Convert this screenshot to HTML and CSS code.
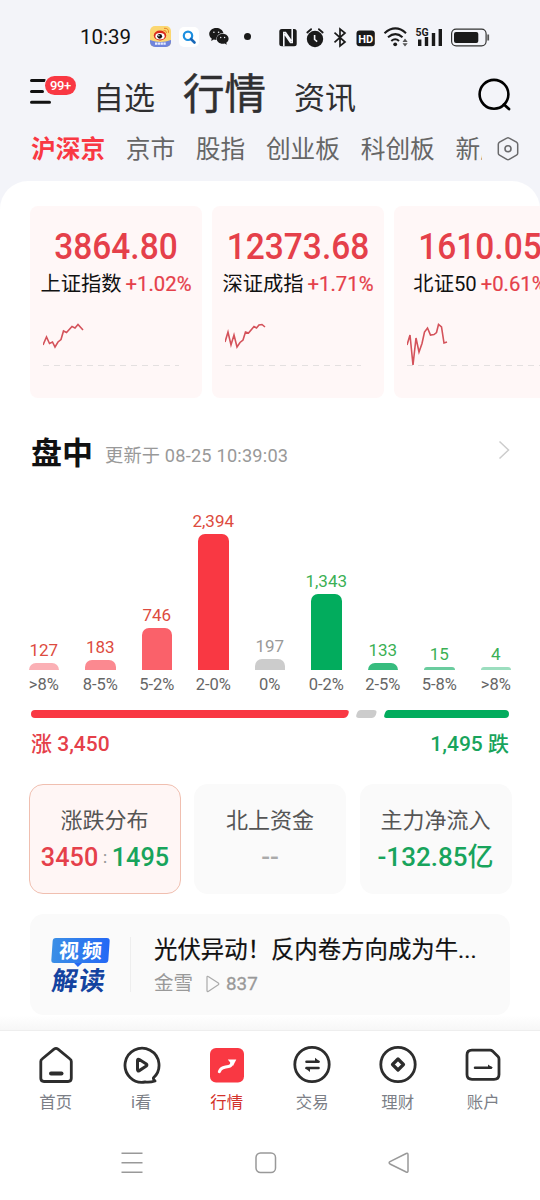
FILE: index.html
```html
<!DOCTYPE html>
<html lang="zh-CN">

<head>
    <meta charset="UTF-8">
    <meta name="viewport" content="width=device-width, initial-scale=1.0">
    <title>行情</title>
    <link rel="stylesheet" href="styles.css">
</head>

<body>

    <!-- Phone status bar -->
    <div class="status-bar">
        <span class="time">10:39</span>
        <svg class="st-weibo" width="21" height="21" viewBox="0 0 21 21">
            <defs>
                <clipPath id="appShape"><rect width="21" height="21" rx="5" /></clipPath>
            </defs>
            <g clip-path="url(#appShape)">
                <rect width="21" height="21" fill="#fbd772" />
                <path d="M0 14q10.500 4 21 0v7H0z" fill="#6f84dc" />
                <ellipse cx="10" cy="9.500" rx="6.200" ry="5" fill="#d92a1c" />
                <ellipse cx="10" cy="10.300" rx="4.600" ry="3.300" fill="#fff" />
                <circle cx="9.700" cy="10.300" r="2.400" fill="#111" />
                <circle cx="8.900" cy="9.800" r=".7" fill="#fff" />
                <path d="M13.500 4.500q3-.5 3 2.500M14 2.300q5-.5 4.500 4.500" fill="none" stroke="#e8842a" stroke-width="1" />
                <path d="M5 17.600h11" stroke="#e8ecff" stroke-width="2.200" stroke-dasharray="2.300 .5" />
            </g>
        </svg>
        <svg class="st-search" width="20" height="20" viewBox="0 0 20 20">
            <rect width="20" height="20" rx="5" fill="#fff" />
            <circle cx="9" cy="8.800" r="4.200" fill="none" stroke="#1d8fe0" stroke-width="2.200" />
            <path d="M12 12l3.500 3.500" stroke="#1767b8" stroke-width="2.600" stroke-linecap="round" />
        </svg>
        <svg class="st-wechat" width="20" height="17" viewBox="0 0 20 17">
            <path d="M7.300 0C3.200 0 .2 2.700.2 6c0 1.900 1 3.500 2.500 4.600L2.200 13l2.600-1.400q1.200.4 2.600.4C7 8 10 5 14.400 5 13.700 2 10.800 0 7.300 0z" fill="#1a1a1a" />
            <path d="M13.700 5.800c-3.400 0-6 2.200-6 5s2.600 5 6 5q1 0 2-.3l2.100 1.200-.5-2c1.400-.9 2.300-2.300 2.300-3.900 0-2.800-2.600-5-5.900-5z" fill="#1a1a1a" />
            <g fill="#f4f5fa">
                <circle cx="4.900" cy="4.300" r=".8" />
                <circle cx="9.600" cy="4.300" r=".8" />
                <circle cx="11.700" cy="9.500" r=".7" />
                <circle cx="15.600" cy="9.500" r=".7" />
            </g>
        </svg>
        <span class="st-dot"></span>
        <svg class="st-system" width="212" height="22" viewBox="278 25 212 22">
            <!-- nfc -->
            <rect x="279.300" y="28" width="17.400" height="17.300" rx="2.500" fill="#1a1a1a" />
            <path d="M283.800 45.300V31.500h1.700l5.800 8.500M292.200 28v13.500h-1.700l-5.800-8.500" fill="none" stroke="#f4f5fa" stroke-width="1.600" />
            <!-- alarm -->
            <circle cx="315" cy="38" r="8.200" fill="#1a1a1a" />
            <path d="M307.300 31.500l3.800-3.300M322.700 31.500l-3.800-3.300" stroke="#1a1a1a" stroke-width="1.800" stroke-linecap="round" />
            <path d="M314.600 34v4.500l2.600 2.200" fill="none" stroke="#f4f5fa" stroke-width="1.600" />
            <!-- bluetooth -->
            <path d="M334.500 31.700l10.500 9.300-5 4V28l5 4-10.500 9.300" fill="none" stroke="#1a1a1a" stroke-width="1.700" />
            <!-- hd -->
            <rect x="356.500" y="29.500" width="18.300" height="15.800" rx="3" fill="#1a1a1a" />
            <text x="365.700" y="42" class="st-hd">HD</text>
            <!-- wifi -->
            <g fill="none" stroke="#1a1a1a" stroke-width="2.100">
                <path d="M384.500 32.200q11-9.500 21.500 0" />
                <path d="M388 36.300q7.500-6.300 14.500 0" />
                <path d="M391.300 40q4-3.500 7.700 0" />
            </g>
            <circle cx="395.200" cy="43.300" r="1.900" fill="#1a1a1a" />
            <path d="M402.500 41l2.500-3.500 2.700 3.500zM402.500 42.200l2.500 3.300 2.700-3.300z" fill="#555" />
            <!-- signal -->
            <text x="415.500" y="35" class="st-5g">5G</text>
            <path d="M419.700 38.500V45M426.500 36V45M433.500 32V45M440.300 28V45" stroke="#1a1a1a" stroke-width="3.400" />
            <!-- battery -->
            <rect x="451.600" y="28.200" width="34.500" height="16.600" rx="4.500" fill="none" stroke="#333" stroke-width="1.200" />
            <rect x="454" y="31" width="24.300" height="11" rx="2" fill="#1a1a1a" />
            <path d="M488.200 33.500v6" stroke="#555" stroke-width="1.800" />
        </svg>
    </div>

    <!-- Main tabs -->
    <div class="top-nav">
        <div class="menu">
            <svg width="22" height="26" viewBox="0 0 22 26">
                <path d="M2.500 2.500h13M2.500 13.400h11M2.500 24.300h18" stroke="#111" stroke-width="3" stroke-linecap="round" />
            </svg>
            <span class="badge">99+</span>
        </div>
        <div class="top-tabs">
            <span>自选</span>
            <span class="active">行情</span>
            <span>资讯</span>
        </div>
        <svg class="search" width="34" height="34" viewBox="0 0 34 34">
            <circle cx="17" cy="16.300" r="14.400" fill="none" stroke="#000" stroke-width="2.600" />
            <path d="M27 26.500l5 4.500" stroke="#000" stroke-width="2.800" stroke-linecap="round" />
        </svg>
    </div>

    <div class="sub-nav">
        <div class="sub-tabs">
            <span class="active">沪深京</span>
            <span>京市</span>
            <span>股指</span>
            <span>创业板</span>
            <span>科创板</span>
            <span>新股</span>
        </div>
        <svg width="24" height="26" viewBox="0 0 24 26" fill="none" stroke="#6a6a6c">
            <path d="M10.800 2.200q1.200-.7 2.400 0l7.300 4q1.200.8 1.200 2v9q0 1.300-1.200 2l-7.300 4.100q-1.200.7-2.400 0l-7.300-4.100q-1.200-.7-1.200-2v-9q0-1.200 1.200-2z" stroke-width="1.500" />
            <circle cx="12" cy="12.700" r="3" stroke-width="1.600" />
        </svg>
    </div>

    <div class="panel">

        <!-- Index cards -->
        <div class="index-list">
            <div class="index-card">
                <div class="index-value">3864.80</div>
                <div class="index-name">上证指数<span>+1.02%</span></div>
                <svg class="spark" width="140" height="50" viewBox="0 0 140 50">
                    <polyline points="0,29 3.500,21 6.500,27.500 9.500,26 12,31 15,26 18,23.500 20.500,15 23.500,16.500 29,10.500 32,12 35,8.500 40,14" />
                    <path d="M0 49.500h136" />
                </svg>
            </div>
            <div class="index-card">
                <div class="index-value">12373.68</div>
                <div class="index-name">深证成指<span>+1.71%</span></div>
                <svg class="spark" width="140" height="50" viewBox="0 0 140 50">
                    <polyline points="0,26 3,16 6,29 9,19 12,31 15,26.500 18,24 20.500,16 23.500,17 29,10.500 31.500,12 34,9 37,8.500 40,11" />
                    <path d="M0 49.500h136" />
                </svg>
            </div>
            <div class="index-card">
                <div class="index-value">1610.05</div>
                <div class="index-name">北证50<span>+0.61%</span></div>
                <svg class="spark" width="140" height="50" viewBox="0 0 140 50">
                    <polyline points="0,29 3,19 6,49 9,22 12,36 15,27.500 17.500,16 20.500,12 23.500,19 27,18.500 29.500,16.500 31.500,8.500 34.500,11 37,27 40,26" />
                    <path d="M0 49.500h136" />
                </svg>
            </div>
        </div>

        <!-- Rise / fall distribution -->
        <div class="section-title">
            <h2>盘中</h2>
            <span class="updated">更新于 08-25 10:39:03</span>
            <svg width="14" height="20" viewBox="0 0 14 20">
                <path d="M2.500 1.500l9 8.500-9 8.500" fill="none" stroke="#ccc" stroke-width="1.500" />
            </svg>
        </div>

        <div class="chart">
            <div class="col up"><b>127</b><i class="bar up-4" style="height: 7px"></i><em>&gt;8%</em></div>
            <div class="col up"><b>183</b><i class="bar up-3" style="height: 10px"></i><em>8-5%</em></div>
            <div class="col up"><b>746</b><i class="bar up-2" style="height: 42px"></i><em>5-2%</em></div>
            <div class="col up"><b>2,394</b><i class="bar up-1" style="height: 136px"></i><em>2-0%</em></div>
            <div class="col flat"><b>197</b><i class="bar" style="height: 11px"></i><em>0%</em></div>
            <div class="col down"><b>1,343</b><i class="bar down-1" style="height: 76px"></i><em>0-2%</em></div>
            <div class="col down"><b>133</b><i class="bar down-2" style="height: 7.500px"></i><em>2-5%</em></div>
            <div class="col down"><b>15</b><i class="bar down-3" style="height: 3.500px"></i><em>5-8%</em></div>
            <div class="col down"><b>4</b><i class="bar down-4" style="height: 3.500px"></i><em>&gt;8%</em></div>
        </div>

        <svg class="ratio" width="478" height="8" viewBox="0 0 478 8">
            <path d="M4 0H315.500Q318.500 0 317.600 3L317 5Q315.500 8 312.500 8H4A4 4 0 0 1 4 0z" fill="#f93843" />
            <path d="M330 0H342.500Q346.300 0 345.400 3L344.800 5Q343.500 8 340.500 8H328Q324.500 8 325.300 5L326 3Q327 0 330 0z" fill="#ccc" />
            <path d="M357.500 0H474A4 4 0 0 1 474 8H355.500Q352.500 8 353.300 5L354 3Q355 0 357.500 0z" fill="#02ac5d" />
        </svg>
        <div class="totals">
            <span class="up-text">涨 3,450</span>
            <span class="down-text">1,495 跌</span>
        </div>

        <!-- Stat tabs -->
        <div class="stats">
            <div class="stat active">
                <div class="stat-label">涨跌分布</div>
                <div class="stat-value narrow"><span class="up-text">3450</span><small>:</small><span class="down-text">1495</span></div>
            </div>
            <div class="stat">
                <div class="stat-label">北上资金</div>
                <div class="stat-value none">--</div>
            </div>
            <div class="stat">
                <div class="stat-label">主力净流入</div>
                <div class="stat-value down-text">-132.85亿</div>
            </div>
        </div>

        <!-- Video commentary -->
        <div class="video">
            <div class="video-logo">
                <span class="logo-top">视频</span>
                <span class="logo-bottom">解读</span>
            </div>
            <div class="video-info">
                <div class="video-title">光伏异动！反内卷方向成为牛...</div>
                <div class="video-meta">
                    <span>金雪</span>
                    <svg width="14" height="18" viewBox="0 0 14 18">
                        <path d="M1 2.200Q1 .8 2.200 1.600L12.300 8Q13.300 9 12.300 9.800L2.200 16.400Q1 17 1 15.800z" fill="none" stroke="#aaa" stroke-width="1.200" />
                    </svg>
                    <span class="plays">837</span>
                </div>
            </div>
        </div>
    </div>

    <!-- Bottom tab bar -->
    <div class="tab-bar">
        <div class="tab">
            <svg width="40" height="40" viewBox="0 0 40 40" fill="none" stroke="#2d2d2d" stroke-width="2.800">
                <path d="M18 4.200q2-1.600 4 0L34 14q1.300 1 1.300 2.500v16.800q0 3.200-3.200 3.200H8q-3.200 0-3.200-3.200V16.500Q4.800 15 6.100 14z" />
                <path d="M15 28.500h10.500" stroke-width="4" stroke-linecap="round" />
            </svg>
            <span>首页</span>
        </div>
        <div class="tab">
            <svg width="40" height="40" viewBox="0 0 40 40" fill="none" stroke="#2d2d2d" stroke-width="2.800">
                <path d="M33.500 35.300q-1.500-1-1-2.500A17 17 0 1 0 24 37q5 .7 10-1" stroke-linejoin="round" stroke-linecap="round" />
                <path d="M16.500 15.500q0-2 1.800-1l7 4.500q1.200 1 0 2l-7 4.600q-1.800 1-1.800-1z" stroke-width="3" />
            </svg>
            <span>i看</span>
        </div>
        <div class="tab active">
            <svg width="40" height="40" viewBox="0 0 40 40">
                <rect x="3" y="3" width="34" height="34.500" rx="6" fill="#f93843" />
                <path d="M12.300 26.700Q13.500 23.500 16 22.700T21.500 21.500 25 17.500" fill="none" stroke="#fff" stroke-width="3" stroke-linecap="round" />
                <path d="M20.800 14.500h8.500l-3.300 6.500z" fill="#fff" />
            </svg>
            <span>行情</span>
        </div>
        <div class="tab">
            <svg width="40" height="40" viewBox="0 0 40 40" fill="none" stroke="#2d2d2d" stroke-width="2.800">
                <circle cx="20" cy="19.500" r="17.200" />
                <path d="M14.500 16.800h12M14.500 23h12" stroke-linecap="round" stroke-width="2.600" />
                <path d="M23 12.800v4h5zM18 27v-4h-5z" fill="#2d2d2d" stroke="none" />
            </svg>
            <span>交易</span>
        </div>
        <div class="tab">
            <svg width="40" height="40" viewBox="0 0 40 40" fill="none" stroke="#2d2d2d" stroke-width="2.800">
                <circle cx="20" cy="19.500" r="17.200" />
                <path d="M20 14l5.500 5.500-5.500 5.500-5.500-5.500z" stroke-width="3.200" stroke-linejoin="round" />
            </svg>
            <span>理财</span>
        </div>
        <div class="tab">
            <svg width="40" height="40" viewBox="0 0 40 40" fill="none" stroke="#2d2d2d" stroke-width="2.800">
                <path d="M9 5.200h18q1.500 0 2.500.9l5.500 5.400q1 1 1 2.500v15.500q0 4.800-5 4.800H9q-5 0-5-4.800V10q0-4.800 5-4.800z" />
                <path d="M12 22.800h16" stroke-width="2.500" stroke-linecap="round" />
                <path d="M25 19.500v3.500h5z" fill="#2d2d2d" stroke="none" />
            </svg>
            <span>账户</span>
        </div>
    </div>

    <!-- System navigation -->
    <div class="system-nav">
        <svg width="22" height="22" viewBox="0 0 22 22"><path d="M.5 1.300h21M.5 10.700h21M.5 20.200h21" /></svg>
        <svg width="22" height="22" viewBox="0 0 22 22"><rect x="1" y="1" width="19.500" height="19.500" rx="4.500" /></svg>
        <svg width="22" height="22" viewBox="0 0 22 22"><path d="M18.200 1.500Q20 .8 20 2.700v16.200q0 1.800-1.800 1.100L2 12Q.3 10.800 2 9.700z" /></svg>
    </div>

</body>

</html>
```
FILE: styles.css
```css
/* Theme colors */
:root {
    --page-bg: #f3f4f9;
    --up: #e5404a;
    --up-strong: #f93843;
    --down: #18a45c;
    --down-strong: #02ac5d;
    --text: #111;
    --muted: #999;
}

* {
    box-sizing: border-box;
}

body {
    font-family: Roboto, "Noto Sans CJK SC", sans-serif;
    background: var(--page-bg);
    color: var(--text);
    margin: 0;
    width: 540px;
    height: 1200px;
    overflow: hidden;
    display: flex;
    flex-direction: column;
}

svg {
    display: block;
    flex: none;
}

.up-text {
    color: var(--up);
}

.down-text {
    color: var(--down);
}

/* Status bar */
.status-bar {
    display: flex;
    align-items: center;
    height: 73px;
    padding-left: 80px;
    flex: none;
}

.time {
    width: 70px;
    font-size: 20.5px;
    line-height: 24px;
}

.st-search {
    margin-left: 8px;
}

.st-wechat {
    margin-left: 10px;
}

.st-dot {
    width: 7px;
    height: 7px;
    margin: 0 27px 0 15px;
    border-radius: 50%;
    background: #1a1a1a;
}

.st-hd {
    font-size: 11px;
    font-weight: 700;
    text-anchor: middle;
    fill: #fff;
}

.st-5g {
    font-size: 10.5px;
    font-weight: 700;
    fill: #1a1a1a;
}

/* Header */
.top-nav {
    display: flex;
    align-items: flex-start;
    height: 49px;
    padding: 0 29px;
    flex: none;
}

.menu {
    position: relative;
    width: 64px;
    padding-top: 5px;
}

.badge {
    position: absolute;
    left: 16px;
    top: 3px;
    width: 31px;
    height: 19px;
    border-radius: 10px;
    background: var(--up-strong);
    box-shadow: 0 0 0 1px var(--page-bg);
    color: #fff;
    font-size: 13px;
    font-weight: 500;
    line-height: 19px;
    letter-spacing: -0.4px;
    text-align: center;
}

.top-tabs {
    display: flex;
    align-items: baseline;
    gap: 28px;
    flex: 1;
    padding-top: 1px;
    font-size: 31px;
    line-height: 42px;
    color: #2f2f31;
}

.top-tabs .active {
    font-size: 41.5px;
    -webkit-text-stroke: 0.5px #2f2f31;
}

.search {
    margin: 5px 0 0;
}

.sub-nav {
    display: flex;
    align-items: center;
    height: 59px;
    padding: 0 0 5px 31px;
    flex: none;
}

.sub-tabs {
    display: flex;
    gap: 20.7px;
    width: 451px;
    margin-right: 14px;
    padding-top: 2px;
    overflow: hidden;
    white-space: nowrap;
    font-size: 24.7px;
    line-height: 36px;
    color: #666;
}

.sub-tabs .active {
    color: var(--up-strong);
    font-weight: 700;
}

/* White content panel */
.panel {
    flex: none;
    height: 849px;
    padding-top: 25px;
    border-radius: 28px 28px 0 0;
    background: linear-gradient(to bottom, #fff 834px, #f7f7f7 849px);
    overflow: hidden;
}

.index-list {
    display: flex;
    gap: 10px;
    padding-left: 30px;
}

.index-card {
    flex: none;
    width: 172px;
    height: 192px;
    padding-top: 23px;
    border-radius: 8px;
    background: #fff7f7;
    text-align: center;
    white-space: nowrap;
}

.index-value {
    font-size: 36px;
    font-weight: 500;
    line-height: 36px;
    color: var(--up);
    transform: scaleX(0.93);
}

.index-name {
    margin-top: 5px;
    font-size: 20.3px;
    line-height: 28px;
}

.index-name span {
    margin-left: 4px;
    color: var(--up);
    -webkit-text-stroke: 0.2px var(--up);
}

.spark {
    margin: 18px 0 0 13px;
    fill: none;
    stroke: #d4525a;
    stroke-width: 1.6;
}

.spark path {
    stroke: #e4e0e0;
    stroke-width: 1;
    stroke-dasharray: 6 5;
}

/* Section title */
.section-title {
    display: flex;
    align-items: center;
    height: 44px;
    margin: 32px 29px 0 31px;
}

.section-title h2 {
    margin: 0 12px 0 0;
    padding-top: 3px;
    font-size: 31px;
    font-weight: 700;
    line-height: 44px;
}

.updated {
    flex: 1;
    padding-top: 4px;
    font-size: 18.2px;
    letter-spacing: 0.2px;
    color: var(--muted);
}

.section-title svg {
    margin-bottom: 4px;
}

/* Distribution chart */
.chart {
    display: flex;
    height: 200px;
    margin-top: 22px;
    padding-left: 15.5px;
}

.col {
    display: flex;
    flex-direction: column;
    align-items: center;
    justify-content: flex-end;
    width: 56.5px;
}

.col b {
    margin-bottom: 3px;
    font-size: 17px;
    font-weight: 400;
    line-height: 20px;
}

.col em {
    margin-top: 4px;
    font-size: 16.5px;
    font-style: normal;
    line-height: 22px;
    color: #666;
}

.bar {
    width: 30.5px;
    border-radius: 7px 7px 0 0;
    background: #ccc;
}

.up b { color: #dd4b40; }
.flat b { color: #999; }
.down b { color: #3bb054; }

.up-1 { background: #f93843; }
.up-2 { background: #fa616a; }
.up-3 { background: #fb8990; }
.up-4 { background: #fbb0b5; }
.down-1 { background: #02ac5d; }
.down-2 { background: #37bc7e; }
.down-3 { background: #6acc9e; }
.down-4 { background: #9cdebf; }

.ratio {
    margin: 14px 0 0 31px;
}

.totals {
    display: flex;
    justify-content: space-between;
    margin: 12px 31px 0;
    font-size: 21px;
    font-weight: 500;
    line-height: 28px;
}

/* Stat tabs */
.stats {
    display: flex;
    gap: 13.5px;
    margin: 26px 0 0 28.5px;
}

.stat {
    width: 152px;
    height: 110px;
    padding-top: 20px;
    border: 1px solid transparent;
    border-radius: 14px;
    background: #fafafa;
    text-align: center;
    white-space: nowrap;
}

.stat.active {
    border-color: #f0bfb0;
    background: #fff6f5;
}

.stat-label {
    font-size: 22px;
    line-height: 32px;
    color: #555;
}

.stat-value {
    margin-top: 2px;
    font-size: 26px;
    font-weight: 500;
    line-height: 36px;
}

.stat-value.narrow {
    transform: scaleX(0.97);
}

.stat-value small {
    display: inline-block;
    width: 14px;
    font-size: 16px;
    vertical-align: 3px;
    color: var(--muted);
}

.stat-value.none {
    color: #aaa;
}

/* Video commentary */
.video {
    display: flex;
    align-items: center;
    width: 480px;
    height: 101px;
    margin: 20px 0 0 30px;
    padding-left: 22px;
    border-radius: 14px;
    background: #fafafa;
}

.video-logo {
    display: flex;
    flex-direction: column;
    width: 57px;
    padding-top: 3px;
}

.logo-top {
    position: relative;
    height: 25px;
    padding-top: 1px;
    border-radius: 3px;
    background: linear-gradient(90deg, #3b8fe6, #2468f5);
    color: #fff;
    font-size: 20px;
    font-weight: 700;
    line-height: 25px;
    letter-spacing: 3px;
    text-indent: 3px;
    text-align: center;
    transform: skewX(-4deg);
}

/* speech bubble tail */
.logo-top::after {
    content: "";
    position: absolute;
    left: 23px;
    top: 25px;
    border: 4px solid transparent;
    border-top-color: #2468f5;
    border-bottom: 0;
}

.logo-bottom {
    margin-top: 5px;
    color: #1443a0;
    font-size: 26px;
    font-weight: 700;
    line-height: 27px;
    letter-spacing: 1px;
    transform: skewX(-8deg);
}

.video-info {
    margin-left: 21px;
    padding-left: 23px;
    border-left: 1.5px solid #eee;
    height: 55px;
}

.video-title {
    margin-top: -3px;
    font-size: 23.4px;
    line-height: 32px;
    white-space: nowrap;
    -webkit-text-stroke: 0.2px var(--text);
}

.video-meta {
    display: flex;
    align-items: center;
    margin-top: 5px;
    font-size: 19.5px;
    line-height: 26px;
    color: var(--muted);
}

.video-meta svg {
    margin: 0 6px 0 13px;
}

.plays {
    font-size: 18.8px;
    -webkit-text-stroke: 0.3px var(--muted);
}

/* Bottom tab bar */
.tab-bar {
    display: flex;
    flex: none;
    height: 95px;
    padding: 14px 13.5px 0 13px;
    border-top: 1px solid #eee;
    background: #fff;
}

.tab {
    display: flex;
    flex-direction: column;
    align-items: center;
    width: 85.5px;
    font-size: 16.4px;
    line-height: 24px;
    color: #7c7f87;
}

.tab span {
    margin-top: 6px;
}

.tab.active {
    color: #d3312b;
}

/* System navigation */
.system-nav {
    display: flex;
    flex: 1;
    justify-content: space-between;
    padding: 27px 130px 0 121px;
    background: #fff;
}

.system-nav svg {
    fill: none;
    stroke: #999;
    stroke-width: 1.5;
}
```
